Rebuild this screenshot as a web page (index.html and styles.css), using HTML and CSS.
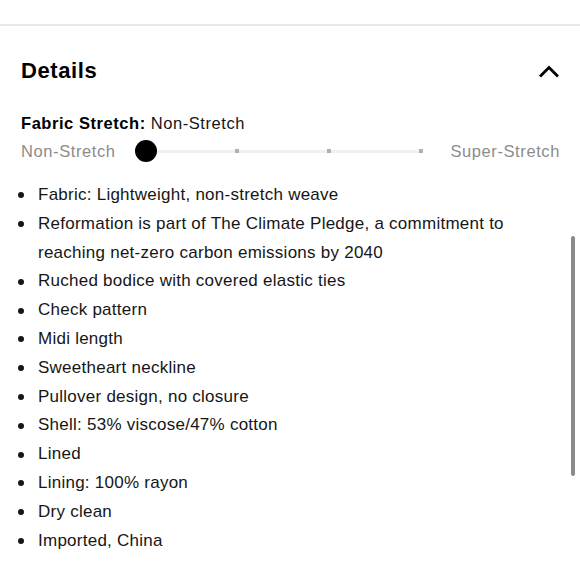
FILE: index.html
```html
<!DOCTYPE html>
<html>
<head>
<meta charset="utf-8">
<link rel="stylesheet" href="styles.css">
</head>
<body>
<div class="page">
  <div class="topbar"></div>
  <section class="details">
    <div class="header">
      <h2 class="title">Details</h2>
      <svg class="chevron" width="22" height="14" viewBox="0 0 22 14"><path d="M2 12.5 L11 3.5 L20 12.5" fill="none" stroke="#000" stroke-width="2.8"/></svg>
    </div>
    <div class="stretch-label"><b>Fabric Stretch:</b> Non-Stretch</div>
    <div class="slider-row">
      <span class="end-label">Non-Stretch</span>
      <div class="track">
        <span class="knob"></span>
        <span class="tick t1"></span>
        <span class="tick t2"></span>
        <span class="tick t3"></span>
      </div>
      <span class="end-label">Super-Stretch</span>
    </div>
    <ul class="list">
      <li>Fabric: Lightweight, non-stretch weave</li>
      <li>Reformation is part of The Climate Pledge, a commitment to reaching net-zero carbon emissions by 2040</li>
      <li>Ruched bodice with covered elastic ties</li>
      <li>Check pattern</li>
      <li>Midi length</li>
      <li>Sweetheart neckline</li>
      <li>Pullover design, no closure</li>
      <li>Shell: 53% viscose/47% cotton</li>
      <li>Lined</li>
      <li>Lining: 100% rayon</li>
      <li>Dry clean</li>
      <li>Imported, China</li>
    </ul>
  </section>
  <div class="scrollbar"></div>
</div>
</body>
</html>
```
FILE: styles.css
```css
* { box-sizing: border-box; }
html, body { margin: 0; padding: 0; background: #fff; }
body { font-family: "Liberation Sans", Arial, sans-serif; color: #161616; }
.page { position: relative; width: 580px; height: 580px; overflow: hidden; }
.topbar { height: 26px; border-bottom: 2px solid #e8e8e8; }
.details { padding: 0 20px 0 21px; }
.header { display: flex; justify-content: space-between; align-items: center; height: 36px; margin-top: 27px; }
.title { margin: 0; font-size: 22px; font-weight: 700; color: #000; letter-spacing: 0.6px; }
.stretch-label { margin-top: 24px; font-size: 16.5px; line-height: 20px; color: #161616; letter-spacing: 0.55px; }
.stretch-label b { font-weight: 700; color: #000; }
.slider-row { display: flex; align-items: center; height: 24px; margin-top: 6px; }
.end-label { font-size: 16.5px; color: #8c8c8c; letter-spacing: 0.6px; }
.track { position: relative; flex: 1; height: 3px; background: #f0f0f0; margin: 0 27px 0 19px; }
.knob { position: absolute; left: 0; top: -10px; width: 22px; height: 22px; border-radius: 50%; background: #000; }
.tick { position: absolute; top: -1px; width: 4px; height: 4px; background: #b0b0b0; }
.t1 { left: 100px; } .t2 { left: 192px; } .t3 { left: 284px; }
.list { list-style: none; margin: 18px 0 0; padding: 0; font-size: 17px; line-height: 28.8px; letter-spacing: 0.25px; color: #161616; }
.list li { display: flex; }
.list li::before { content: ""; flex: none; width: 6px; height: 6px; border-radius: 50%; background: #161616; margin: 11.4px 14px 0 -3px; }
.scrollbar { position: absolute; left: 571px; top: 236px; width: 4px; height: 240px; border-radius: 2px; background: #8a8a8a; }
```
